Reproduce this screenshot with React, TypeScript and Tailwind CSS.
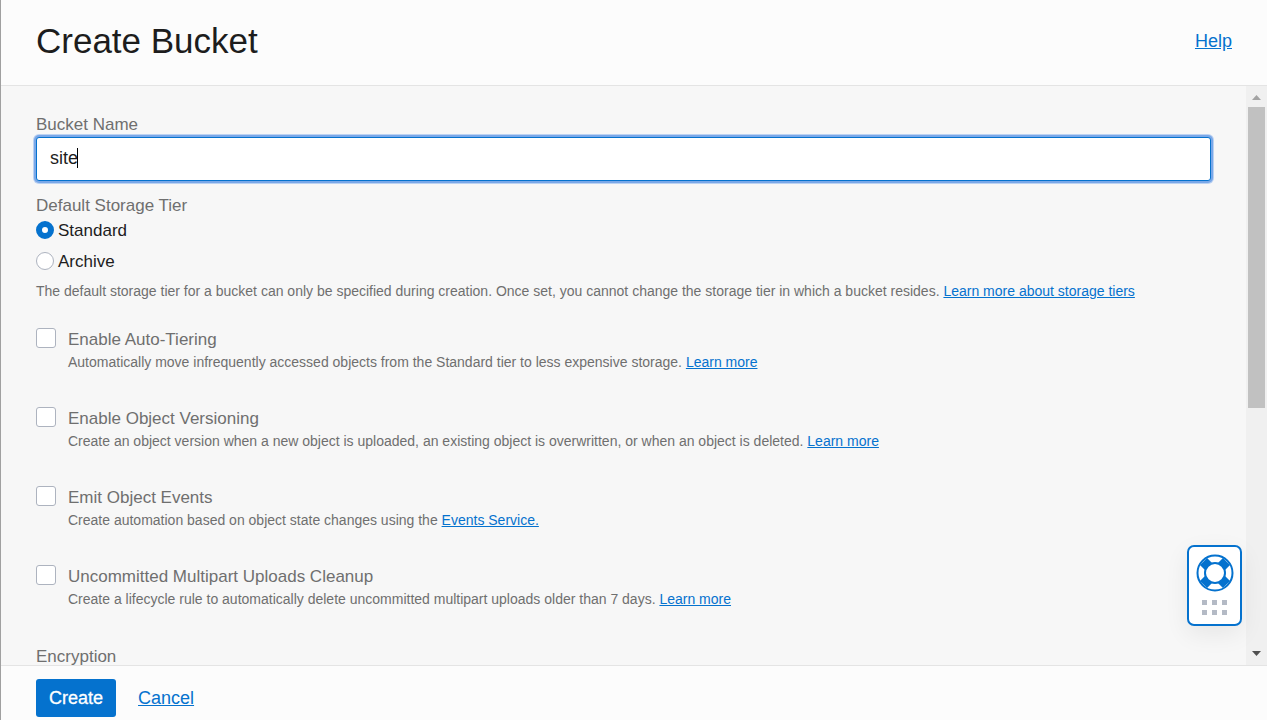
import { useState } from "react";
import type { ReactNode } from "react";

const link = "text-[#0572ce] underline underline-offset-1";

function LearnLink({ children }: { children: ReactNode }) {
  return (
    <a href="#" className={link}>
      {children}
    </a>
  );
}

function Option({ id, title, children }: { id: string; title: string; children: ReactNode }) {
  return (
    <div className="flex gap-3">
      <input
        id={id}
        type="checkbox"
        className="size-5 shrink-0 appearance-none rounded-[3px] border border-[#adb3bf] bg-white checked:border-[#0572ce] checked:bg-[#0572ce]"
      />
      <div>
        <label htmlFor={id} className="block text-[17px] leading-6">
          {title}
        </label>
        <p className="text-[14px] leading-5">{children}</p>
      </div>
    </div>
  );
}

function Tier({ value, tier, onChange }: { value: string; tier: string; onChange: (v: string) => void }) {
  return (
    <label className="flex h-6 items-start gap-1 text-[17px] leading-6 text-[#1d1d1d]">
      <input
        type="radio"
        name="tier"
        checked={tier === value}
        onChange={() => onChange(value)}
        className="mt-0.5 size-[18px] appearance-none rounded-full border border-[#adb3bf] bg-white checked:border-[6px] checked:border-[#0572ce]"
      />
      {value}
    </label>
  );
}

function Lifebuoy() {
  return (
    <svg viewBox="0 0 38 38" className="size-[38px]" fill="none" stroke="#0572ce" aria-hidden="true">
      <path d="M7.5 7.5L30.5 30.5M30.5 7.5L7.5 30.5" strokeWidth="10" />
      <circle cx="19" cy="19" r="17.5" strokeWidth="2" />
      <circle cx="19" cy="19" r="10" fill="#fff" strokeWidth="2" />
    </svg>
  );
}

export default function App() {
  const [name, setName] = useState("site");
  const [tier, setTier] = useState("Standard");
  const [focused, setFocused] = useState(true);

  return (
    <div className="flex h-screen flex-col border-l border-[#a0a0a0] bg-[#fcfcfc] font-['Liberation_Sans',Arial,sans-serif] text-[#6f6f6f]">
      <header className="flex h-[86px] shrink-0 items-center justify-between border-b border-[#e4e4e4] px-[35px] pb-1">
        <h1 className="text-[35px] leading-10 text-[#1d1d1d]">Create Bucket</h1>
        <a href="#" className={`${link} text-[18px] leading-6`}>
          Help
        </a>
      </header>

      <div className="flex min-h-0 flex-1 bg-[#f7f7f7]">
        <main className="min-w-0 flex-1 overflow-y-auto pt-[27px] pr-[35px] pl-[35px] [scrollbar-width:none]">
          <label htmlFor="bucket" className="block text-[17px] leading-6">
            Bucket Name
          </label>
          <div className="relative">
            <input
              id="bucket"
              type="text"
              value={name}
              onChange={(e) => {
                setName(e.target.value);
                setFocused(false);
              }}
              className="block h-11 w-full rounded-[3px] border border-[#0572ce] bg-white px-[13px] pb-0.5 text-[18px] text-[#1d1d1d] shadow-[0_0_0_2px_#7aa8e8,0_0_0_3px_#bcd2f2] outline-none"
            />
            {focused && <span className="absolute top-[11px] left-[41px] h-5 w-px bg-black" />}
          </div>

          <fieldset className="mt-[13px]">
            <legend className="text-[17px] leading-6">Default Storage Tier</legend>
            <div className="flex flex-col items-start gap-[7px] pt-px">
              <Tier value="Standard" tier={tier} onChange={setTier} />
              <Tier value="Archive" tier={tier} onChange={setTier} />
            </div>
          </fieldset>
          <p className="mt-[7px] text-[14px] leading-5">
            The default storage tier for a bucket can only be specified during creation. Once set, you cannot change
            the storage tier in which a bucket resides. <LearnLink>Learn more about storage tiers</LearnLink>
          </p>

          <div className="mt-[27px] flex flex-col gap-[35px]">
            <Option id="auto-tiering" title="Enable Auto-Tiering">
              Automatically move infrequently accessed objects from the Standard tier to less expensive storage.{" "}
              <LearnLink>Learn more</LearnLink>
            </Option>
            <Option id="versioning" title="Enable Object Versioning">
              Create an object version when a new object is uploaded, an existing object is overwritten, or when an
              object is deleted. <LearnLink>Learn more</LearnLink>
            </Option>
            <Option id="events" title="Emit Object Events">
              Create automation based on object state changes using the <LearnLink>Events Service.</LearnLink>
            </Option>
            <Option id="cleanup" title="Uncommitted Multipart Uploads Cleanup">
              Create a lifecycle rule to automatically delete uncommitted multipart uploads older than 7 days.{" "}
              <LearnLink>Learn more</LearnLink>
            </Option>
            <h2 className="pt-px text-[17px] leading-6">Encryption</h2>
          </div>
        </main>

        <div className="flex w-[21px] shrink-0 flex-col items-center bg-[#f0f0f0]" aria-hidden="true">
          <svg viewBox="0 0 21 21" className="size-[21px] shrink-0">
            <path d="M6 14 L10.5 9 L15 14 Z" fill="#a3a3a3" />
          </svg>
          <div className="min-h-0 w-full flex-1 px-0.5">
            <div className="h-[56%] bg-[#c1c1c1]" />
          </div>
          <svg viewBox="0 0 21 21" className="size-[21px] shrink-0">
            <path d="M6 7 L15 7 L10.5 12 Z" fill="#505050" />
          </svg>
        </div>
      </div>

      <footer className="flex h-[55px] shrink-0 items-start gap-[22px] border-t border-[#e4e4e4] px-[35px] pt-[13px]">
        <button
          type="button"
          className="h-[38px] rounded-[3px] bg-[#0572ce] px-[13px] text-[18px] text-white [-webkit-text-stroke:0.3px_white]"
        >
          Create
        </button>
        <a href="#" className={`${link} text-[18px] leading-[38px]`}>
          Cancel
        </a>
      </footer>

      <button
        type="button"
        aria-label="Support"
        className="fixed right-[25px] bottom-[94px] flex h-[81px] w-[55px] flex-col items-center gap-2 rounded-[7px] border-2 border-[#0572ce] bg-white pt-[7px] shadow-[0_8px_24px_rgba(0,0,0,0.07)]"
      >
        <Lifebuoy />
        <svg viewBox="0 0 25 15" className="h-[15px] w-[25px]" fill="#b4bac5" aria-hidden="true">
          <path d="M0 0h5v5H0zM10 0h5v5h-5zM20 0h5v5h-5zM0 10h5v5H0zM10 10h5v5h-5zM20 10h5v5h-5z" />
        </svg>
      </button>
    </div>
  );
}
